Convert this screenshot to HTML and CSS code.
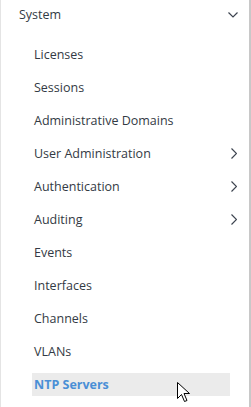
FILE: index.html
```html
<!DOCTYPE html>
<html lang="en">
<head>
    <meta charset="UTF-8">
    <title>System menu</title>
    <link rel="stylesheet" href="styles.css">
</head>
<body>
    <div class="panel">
        <div class="group">
            <span>System</span>
            <svg class="chev" width="10" height="6" viewBox="0 0 10 6"><path d="M0.5 0.5 L5 5 L9.5 0.5" fill="none" stroke="#3d4450" stroke-width="1.2"/></svg>
        </div>
        <ul class="items">
            <li class="item">Licenses</li>
            <li class="item">Sessions</li>
            <li class="item">Administrative Domains</li>
            <li class="item">User Administration <svg class="arrow" width="6" height="11" viewBox="0 0 6 11"><path d="M0.5 0.5 L5.5 5.5 L0.5 10.5" fill="none" stroke="#3d4450" stroke-width="1.2"/></svg></li>
            <li class="item">Authentication <svg class="arrow" width="6" height="11" viewBox="0 0 6 11"><path d="M0.5 0.5 L5.5 5.5 L0.5 10.5" fill="none" stroke="#3d4450" stroke-width="1.2"/></svg></li>
            <li class="item">Auditing <svg class="arrow" width="6" height="11" viewBox="0 0 6 11"><path d="M0.5 0.5 L5.5 5.5 L0.5 10.5" fill="none" stroke="#3d4450" stroke-width="1.2"/></svg></li>
            <li class="item">Events</li>
            <li class="item">Interfaces</li>
            <li class="item">Channels</li>
            <li class="item">VLANs</li>
            <li class="item active">NTP Servers
                <svg class="cursor" width="14" height="22" viewBox="0 0 14 22"><path d="M0.5 0.5 L0.5 16.5 L4.5 12.5 L7.5 19.5 L10 18.5 L7 11.5 L12.5 11.5 Z" fill="#fff" stroke="#000" stroke-width="1"/></svg>
            </li>
        </ul>
    </div>
</body>
</html>
```

FILE: styles.css
```css
* {
    margin: 0;
    padding: 0;
    box-sizing: border-box;
}

body {
    font-family: "Open Sans", "Noto Sans", sans-serif;
    background: #ffffff;
    color: #333a44;
    width: 251px;
    height: 407px;
    overflow: hidden;
}

.panel {
    width: 251px;
    height: 407px;
    border-left: 1px solid #e4e4e4;
    border-right: 2px solid #c8c8c8;
}

.group {
    display: flex;
    align-items: center;
    justify-content: space-between;
    height: 29px;
    padding: 0 11px 0 18px;
    font-size: 12.5px;
}

.chev {
    margin-top: 1px;
}

.items {
    list-style: none;
    padding: 9px 0 0 31px;
}

.item {
    position: relative;
    display: flex;
    align-items: center;
    justify-content: space-between;
    height: 33px;
    width: 198px;
    padding: 0 0 0 2px;
    font-size: 12.5px;
}

.arrow {
    margin-right: -7px;
}

.item.active {
    height: 23px;
    margin-top: 5px;
    background: #ebebeb;
    color: #4a8fd6;
    font-weight: 700;
}

.cursor {
    position: absolute;
    left: 145px;
    top: 9px;
}
```
